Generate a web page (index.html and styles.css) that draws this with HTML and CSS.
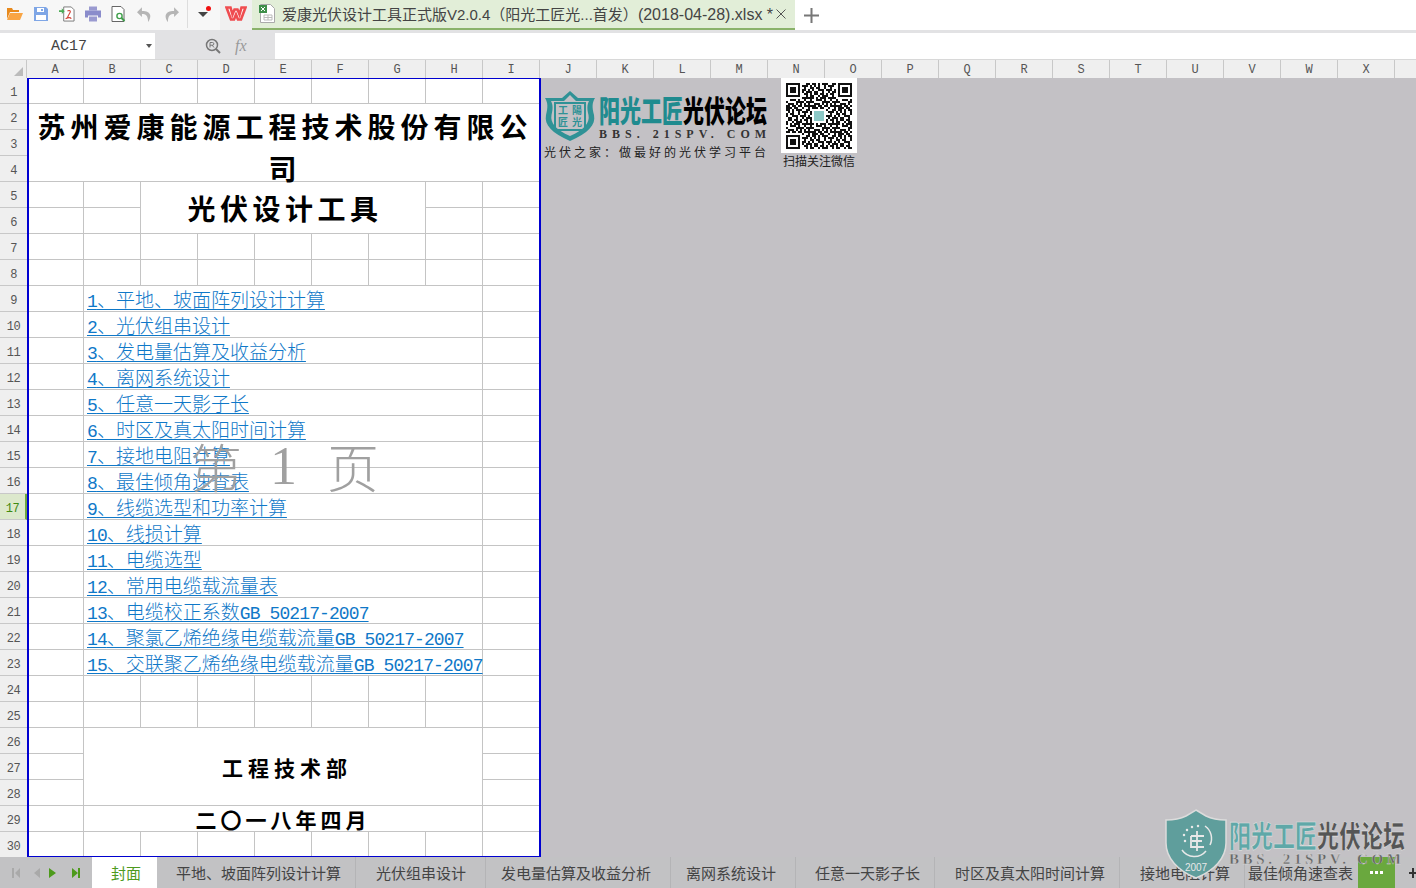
FILE: index.html
```html
<!DOCTYPE html>
<html lang="zh-CN">

<head>
    <meta charset="UTF-8">
    <title>爱康光伏设计工具</title>
    <link rel="stylesheet" href="styles.css">
</head>

<body>
    <div class="topbar">
        <div class="quick">
            <svg class="qicon" viewBox="0 0 16 14"><path d="M0 3V1h5l1 2h6v2H3L0 12z" fill="#e8891c"/><path d="M3 6h13l-3 7H0z" fill="#f9a545"/></svg>
            <svg class="qicon" viewBox="0 0 16 16"><path d="M1 1h12l2 2v12H1z" fill="#7fa6e6"/><path d="M4 2h7v4H4z" fill="#fff"/><path d="M8 3h2v2H8z" fill="#7fa6e6"/><path d="M3 9h10v5H3z" fill="#fff"/></svg>
            <svg class="qicon" viewBox="0 0 17 16"><path d="M5 .5h8l3 3v12H5z" fill="#fff" stroke="#777"/><path d="M0 4h3V2l3 3-3 3V6H0z" fill="#4bad55"/><path d="M9 12c1-3 2-4 3-6 .5-2-2-2-3-1M7 13c2-1 5-2 6 0" fill="none" stroke="#d4473c" stroke-width="1.2"/></svg>
            <svg class="qicon" viewBox="0 0 16 15"><path d="M4 0h8v4H4z" fill="#9a9ad0"/><path d="M0 4h16v7h-3V9H3v2H0z" fill="#8a8ccb"/><path d="M4 10h8v5H4z" fill="#9a9ad0"/></svg>
            <svg class="qicon" viewBox="0 0 15 16"><path d="M.5.5h9l3 3v12H.5z" fill="#fff" stroke="#666"/><circle cx="8" cy="10" r="2.6" fill="none" stroke="#3f9f4a" stroke-width="1.4"/><path d="M10 12l3 3" stroke="#3f9f4a" stroke-width="2"/></svg>
            <svg class="qicon" viewBox="0 0 13 13"><path d="M4 1L0 5l4 4V6.500c3 0 5 1 5 6.500 3-4 3-9-5-9z" fill="#b5b5b5"/></svg>
            <svg class="qicon" viewBox="0 0 13 13"><path d="M9 1l4 4-4 4V6.500c-3 0-5 1-5 6.500-3-4-3-9 5-9z" fill="#b5b5b5"/></svg>
            <span class="qsep"></span>
            <span class="qmenu"><span class="qdot"></span></span>
        </div>
        <div class="wps">
            <svg width="22" height="15" viewBox="0 0 22 15"><path d="M1.500 1.500h4l2 7 2-5h3l2 5 2-7h4l-4.500 12h-3l-2-5-2 5h-3z" fill="#fff" stroke="#ef4c50" stroke-width="2.600"/></svg>
        </div>
        <div class="file-tab">
            <svg width="17" height="19" viewBox="0 0 17 19"><path d="M1.500.5h10l4 4v14h-14z" fill="#fff" stroke="#aaa"/><path d="M0 1h8v8H0z" fill="#3f8f4a"/><path d="M2 3l4 4M6 3l-4 4" stroke="#fff"/><path d="M5 11h8v5H5zM5 13.500h8M9 11v5" fill="none" stroke="#bbb"/></svg>
            <span class="file-name">爱康光伏设计工具正式版V2.0.4（阳光工匠光...首发）<span class="file-date">(2018-04-28).xlsx *</span></span>
            <svg class="file-close" width="10" height="10" viewBox="0 0 10 10"><path d="M.5.5l9 9M9.500.5l-9 9" stroke="#555"/></svg>
        </div>
        <div class="new-tab">
            <svg width="15" height="15" viewBox="0 0 15 15"><path d="M7.500 0v15M0 7.500h15" stroke="#777" stroke-width="2"/></svg>
        </div>
    </div>

    <div class="formula-bar">
        <div class="name-box"><span>AC17</span><i class="caret"></i></div>
        <div class="formula-tools">
            <svg width="16" height="16" viewBox="0 0 16 16"><circle cx="7" cy="7" r="5.500" fill="none" stroke="#777" stroke-width="1.500"/><path d="M11 11l4 4" stroke="#777" stroke-width="2"/><path d="M5 9.500V4.500h2.500a1.300 1.300 0 010 2.700H5M7 7l2 2.500" fill="none" stroke="#777"/></svg>
            <span class="fx">fx</span>
        </div>
        <div class="formula-input"></div>
    </div>

    <div class="col-heads">
        <div class="corner"><i></i></div>
        <span>A</span><span>B</span><span>C</span><span>D</span><span>E</span><span>F</span><span>G</span><span>H</span><span>I</span>
        <span>J</span><span>K</span><span>L</span><span>M</span><span>N</span><span>O</span><span>P</span><span>Q</span><span>R</span>
        <span>S</span><span>T</span><span>U</span><span>V</span><span>W</span><span>X</span><span></span>
    </div>

    <div class="main">
        <div class="row-heads">
            <span>1</span><span>2</span><span>3</span><span>4</span><span>5</span><span>6</span><span>7</span><span>8</span><span>9</span><span>10</span>
            <span>11</span><span>12</span><span>13</span><span>14</span><span>15</span><span>16</span><span class="current">17</span><span>18</span><span>19</span><span>20</span>
            <span>21</span><span>22</span><span>23</span><span>24</span><span>25</span><span>26</span><span>27</span><span>28</span><span>29</span><span>30</span>
        </div>

        <div class="sheet-wrap">
            <table class="sheet">
                <tr><td></td><td></td><td></td><td></td><td></td><td></td><td></td><td></td><td></td></tr>
                <tr><td colspan="9" rowspan="3" class="title"><div>苏州爱康能源工程技术股份有限公司</div></td></tr>
                <tr></tr>
                <tr></tr>
                <tr><td></td><td></td><td colspan="5" rowspan="2" class="subtitle">光伏设计工具</td><td></td><td></td></tr>
                <tr><td></td><td></td><td></td><td></td></tr>
                <tr><td></td><td></td><td></td><td></td><td></td><td></td><td></td><td></td><td></td></tr>
                <tr><td></td><td></td><td></td><td></td><td></td><td></td><td></td><td></td><td></td></tr>
                <tr><td></td><td colspan="7" class="link"><a href="#"><b>1</b>、平地、坡面阵列设计计算</a></td><td></td></tr>
                <tr><td></td><td colspan="7" class="link"><a href="#"><b>2</b>、光伏组串设计</a></td><td></td></tr>
                <tr><td></td><td colspan="7" class="link"><a href="#"><b>3</b>、发电量估算及收益分析</a></td><td></td></tr>
                <tr><td></td><td colspan="7" class="link"><a href="#"><b>4</b>、离网系统设计</a></td><td></td></tr>
                <tr><td></td><td colspan="7" class="link"><a href="#"><b>5</b>、任意一天影子长</a></td><td></td></tr>
                <tr><td></td><td colspan="7" class="link"><a href="#"><b>6</b>、时区及真太阳时间计算</a></td><td></td></tr>
                <tr><td></td><td colspan="7" class="link"><a href="#"><b>7</b>、接地电阻计算</a></td><td></td></tr>
                <tr><td></td><td colspan="7" class="link"><a href="#"><b>8</b>、最佳倾角速查表</a></td><td></td></tr>
                <tr><td></td><td colspan="7" class="link"><a href="#"><b>9</b>、线缆选型和功率计算</a></td><td></td></tr>
                <tr><td></td><td colspan="7" class="link"><a href="#"><b>10</b>、线损计算</a></td><td></td></tr>
                <tr><td></td><td colspan="7" class="link"><a href="#"><b>11</b>、电缆选型</a></td><td></td></tr>
                <tr><td></td><td colspan="7" class="link"><a href="#"><b>12</b>、常用电缆载流量表</a></td><td></td></tr>
                <tr><td></td><td colspan="7" class="link"><a href="#"><b>13</b>、电缆校正系数<b>GB 50217-2007</b></a></td><td></td></tr>
                <tr><td></td><td colspan="7" class="link"><a href="#"><b>14</b>、聚氯乙烯绝缘电缆载流量<b>GB 50217-2007</b></a></td><td></td></tr>
                <tr><td></td><td colspan="7" class="link"><a href="#"><b>15</b>、交联聚乙烯绝缘电缆载流量<b>GB 50217-2007</b></a></td><td></td></tr>
                <tr><td></td><td></td><td></td><td></td><td></td><td></td><td></td><td></td><td></td></tr>
                <tr><td></td><td></td><td></td><td></td><td></td><td></td><td></td><td></td><td></td></tr>
                <tr><td></td><td colspan="7" rowspan="3" class="dept">工程技术部</td><td></td></tr>
                <tr><td></td><td></td></tr>
                <tr><td></td><td></td></tr>
                <tr><td></td><td colspan="7" class="date">二〇一八年四月</td><td></td></tr>
                <tr><td></td><td></td><td></td><td></td><td></td><td></td><td></td><td></td><td></td></tr>
            </table>
            <div class="page-mark"><span>第</span><span class="page-no">1</span><span>页</span></div>
            <div class="print-area"></div>
        </div>

        <div class="canvas">
            <div class="forum-logo">
                <div class="forum-head">
                    <svg class="shield" width="52" height="52" viewBox="0 0 52 52">
                        <path d="M26 1l8 7h17c-3 5-3 9-1 17 2 10-6 18-24 26C8 43 0 35 2 25 4 17 4 13 1 8h17z" fill="#2f9296"/>
                        <path d="M26 5l6 6h13c-2 4-2 8-.5 14C46 33 40 40 26 46 12 40 6 33 7.500 25 9 19 9 15 7 11h13z" fill="#c3c1c5"/>
                        <path d="M11 13h30v27H11z" fill="none" stroke="#2f9296" stroke-width="2"/>
                        <text x="14" y="24" class="shield-text">工</text>
                        <text x="28" y="24" class="shield-text">陽</text>
                        <text x="14" y="36" class="shield-text">匠</text>
                        <text x="28" y="36" class="shield-text">光</text>
                    </svg>
                    <div>
                        <div class="forum-name"><span class="teal">阳光工匠</span><span>光伏论坛</span></div>
                        <div class="forum-url">BBS. 21SPV. COM</div>
                    </div>
                </div>
                <div class="forum-tag">光伏之家：做最好的光伏学习平台</div>
            </div>
            <div class="qr-box">
                <div class="qr">
                    <svg width="66" height="66" viewBox="0 0 33 33" shape-rendering="crispEdges">
                        <defs>
                            <pattern id="qr-tile" width="13" height="13" patternUnits="userSpaceOnUse">
                                <path d="M0 0h2v1H0zM3 0h1v2H3zM5 0h3v1H5zM10 0h2v1h-2zM1 1h1v1H1zM6 1h1v2H6zM8 1h3v1H8zM12 1h1v2h-1zM0 2h1v2H0zM2 2h2v1H2zM9 2h1v2H9zM3 3h3v1H3zM7 3h2v1H7zM11 3h1v1h-1zM1 4h2v2H1zM5 4h1v2H5zM8 4h1v1H8zM10 4h3v1h-3zM4 5h1v1H4zM7 5h1v2H7zM9 5h2v1H9zM12 5h1v2h-1zM0 6h1v2H0zM3 6h1v1H3zM5 6h2v1H5zM10 6h1v2h-1zM2 7h1v2H2zM4 7h3v1H4zM8 7h2v1H8zM11 7h2v1h-2zM0 9h1v1H0zM3 8h2v1H3zM6 8h1v2H6zM9 8h1v1H9zM12 8h1v2h-1zM1 10h3v1H1zM5 9h1v2H5zM7 9h2v1H7zM10 9h2v1h-2zM7 10h1v2H7zM9 10h1v2H9zM11 10h1v1h-1zM0 11h2v2H0zM3 11h2v1H3zM6 11h1v1H6zM10 11h3v1h-3zM2 12h1v1H2zM4 12h2v1H4zM8 12h1v1H8zM11 12h1v1h-1z" fill="#111"/>
                            </pattern>
                        </defs>
                        <rect width="33" height="33" fill="url(#qr-tile)"/>
                        <path d="M0 0h8v8H0zM25 0h8v8h-8zM0 25h8v8H0zM13 13h7v7h-7z" fill="#fff"/>
                        <path d="M0 0h7v7H0zM1 1v5h5V1zM2 2h3v3H2zM26 0h7v7h-7zM27 1v5h5V1zM28 2h3v3h-3zM0 26h7v7H0zM1 27v5h5v-5zM2 28h3v3H2z" fill="#111" fill-rule="evenodd"/>
                        <path d="M14 14h5v5h-5z" fill="#8cc8c6"/>
                    </svg>
                </div>
                <div class="qr-caption">扫描关注微信</div>
            </div>
        </div>
    </div>

    <div class="sheet-tabs">
        <div class="tab-nav">
            <svg width="80" height="12" viewBox="0 0 80 12">
                <path d="M12 1h2v10h-2zM20 1v10l-5-5zM40 1v10l-6-5z" fill="#a9a9a9"/>
                <path d="M49 1v10l7-5zM72 1l6 5-6 5zM78 1h2v10h-2z" fill="#4d9a1c"/>
            </svg>
        </div>
        <div class="tab active">封面</div>
        <div class="tab">平地、坡面阵列设计计算</div>
        <div class="tab tab-roomy">光伏组串设计</div>
        <div class="tab tab-tight">发电量估算及收益分析</div>
        <div class="tab tab-tight">离网系统设计</div>
        <div class="tab">任意一天影子长</div>
        <div class="tab tab-late">时区及真太阳时间计算</div>
        <div class="tab tab-late">接地电阻计算</div>
        <div class="tab tab-last">最佳倾角速查表</div>
        <div class="tab-more"><i></i><i></i><i></i></div>
        <div class="tab-add"></div>
    </div>

    <div class="stamp">
        <svg width="62" height="70" viewBox="0 0 62 70">
            <path d="M31 1l10 6c6 3 13 4 20 4v23c0 15-12 28-30 35C13 62 1 49 1 34V11c7 0 14-1 20-4z" fill="#5f9e9c" stroke="#dcdcdc" stroke-width="1.500"/>
            <path d="M40 17a15 15 0 015 19M41 42a15 15 0 01-24-1" fill="none" stroke="#e8e8e8" stroke-width="1.500"/>
            <path d="M20 32v.1M19 26v.1M22 21v.1M27 18v.1M33 17v.1" stroke="#e8e8e8" stroke-width="2.500" stroke-linecap="round"/>
            <path d="M26 27h13M26 27v11h13M32 22v20M27 32h10" fill="none" stroke="#e8e8e8" stroke-width="1.800"/>
            <text x="31" y="62" class="stamp-year">2007</text>
        </svg>
        <div>
            <div class="stamp-name"><span class="stamp-teal">阳光工匠</span><span>光伏论坛</span></div>
            <div class="stamp-url">BBS. 21SPV. COM</div>
        </div>
    </div>
</body>

</html>
```

FILE: styles.css
```css
* {
    box-sizing: border-box;
}

body {
    margin: 0;
    width: 1416px;
    height: 888px;
    overflow: hidden;
    position: relative;
    background-color: #c3c1c5;
    font-family: "Noto Sans CJK SC", "Noto Sans", sans-serif;
}

/* title bar */
.topbar {
    display: flex;
    height: 33px;
    background-color: #fff;
    border-bottom: 3px solid #e2e2e4;
}

.quick {
    display: flex;
    align-items: center;
    width: 220px;
    padding: 0 0 2px 2px;
    background-color: #f7f7f7;
}

.qicon {
    width: 16px;
    height: 16px;
    margin: 0 5px;
}

.qsep {
    width: 1px;
    height: 28px;
    margin-left: 3px;
    background-color: #ddd;
}

.qmenu {
    position: relative;
    margin-left: 10px;
    border-top: 5px solid #444;
    border-left: 5px solid transparent;
    border-right: 5px solid transparent;
}

.qdot {
    position: absolute;
    left: 3px;
    top: -11px;
    width: 5px;
    height: 5px;
    border-radius: 50%;
    background-color: #f01010;
}

.wps {
    display: flex;
    align-items: center;
    justify-content: center;
    width: 32px;
    padding-bottom: 3px;
    background-color: #f0f0f0;
}

.file-tab {
    display: flex;
    align-items: center;
    width: 543px;
    padding: 0 0 1px 7px;
    background-color: #e2eed8;
    border-bottom: 2px solid #8ab26a;
    color: #444;
    font-family: "Liberation Sans", "Noto Sans CJK SC", sans-serif;
    font-size: 15px;
}

.file-name {
    margin-left: 6px;
    white-space: nowrap;
}

.file-date {
    font-size: 16px;
}

.file-close {
    margin-left: 3px;
}

.new-tab {
    display: flex;
    align-items: center;
    margin-left: 9px;
}

/* name box and formula */
.formula-bar {
    display: flex;
    height: 27px;
    background-color: #e2e2e4;
    border-bottom: 1px solid #d8d8d8;
}

.name-box {
    position: relative;
    width: 155px;
    background-color: #fff;
    padding-left: 51px;
    font: 15px/27px "Liberation Mono", monospace;
    color: #444;
}

.caret {
    position: absolute;
    right: 3px;
    top: 11px;
    border-top: 4px solid #555;
    border-left: 3.500px solid transparent;
    border-right: 3.500px solid transparent;
}

.formula-tools {
    display: flex;
    align-items: center;
    width: 120px;
    padding-left: 50px;
    gap: 14px;
}

.fx {
    font: italic 16px "Liberation Serif", serif;
    color: #999;
}

.formula-input {
    flex: 1;
    background-color: #fff;
}

/* column header */
.col-heads {
    display: flex;
    height: 18px;
    background-color: #efefef;
}

.col-heads span {
    flex: 0 0 57px;
    border-right: 1px solid #c8c8c8;
    text-align: center;
    font: 12px/20px "Liberation Mono", monospace;
    color: #555;
}

.corner {
    position: relative;
    flex: 0 0 27px;
    border-right: 1px solid #c8c8c8;
}

.corner i {
    position: absolute;
    right: 3px;
    bottom: 2px;
    border-bottom: 9px solid #bbb;
    border-left: 9px solid transparent;
}

/* sheet */
.main {
    display: flex;
    height: 779px;
    overflow: hidden;
}

.row-heads {
    flex: 0 0 27px;
    background-color: #efefef;
}

.row-heads span {
    display: block;
    height: 26px;
    border-bottom: 1px solid #c8c8c8;
    text-align: center;
    font: 12px/30px "Liberation Mono", monospace;
    letter-spacing: -0.5px;
    color: #555;
}

.row-heads .current {
    background-color: #dce8cc;
    border-right: 2px solid #6fa840;
    color: #3f8a10;
}

.sheet-wrap {
    position: relative;
    flex: 0 0 513px;
}

.sheet {
    table-layout: fixed;
    width: 513px;
    border-spacing: 0;
    background-color: #fff;
}

.sheet td {
    width: 57px;
    height: 26px;
    padding: 0;
    border-right: 1px solid #c4c4c4;
    border-bottom: 1px solid #c4c4c4;
    white-space: nowrap;
}

.sheet .title {
    vertical-align: top;
    white-space: normal;
}

/* the merged cell keeps its height, the wrapped line runs to its bottom edge */
.title div {
    height: 77px;
    padding: 1px 0 0 4px;
    text-align: center;
    font-size: 28px;
    font-weight: 700;
    line-height: 42px;
    letter-spacing: 5px;
    color: #000;
}

.sheet .subtitle {
    padding-left: 4px;
    text-align: center;
    font-size: 28px;
    font-weight: 700;
    letter-spacing: 4.500px;
    line-height: 40px;
    color: #000;
}

.sheet .dept,
.sheet .date {
    text-align: center;
    font-size: 21px;
    font-weight: 700;
    letter-spacing: 5px;
    line-height: 24px;
    color: #000;
}

.sheet .dept {
    padding-left: 8px;
}

.sheet .date {
    letter-spacing: 4px;
}

.sheet .link {
    padding-left: 3px;
    vertical-align: top;
}

.link a {
    display: block;
    height: 25px;
    color: #0f78c8;
    font-size: 19px;
    font-weight: 300;
    line-height: 26px;
    text-decoration-thickness: 1px;
    text-underline-offset: 2px;
}

.link b {
    font-family: "Liberation Mono", monospace;
    font-size: 18px;
    font-weight: 400;
    letter-spacing: -0.9px;
}

/* the print page mark lies over the cells */
.page-mark {
    position: absolute;
    left: 163px;
    top: 356px;
    display: flex;
    align-items: center;
    font-size: 52px;
    font-weight: 300;
    line-height: 64px;
    color: #a0a0a0;
}

.page-no {
    margin: 0 30px 0 28px;
    font-family: "Liberation Serif", serif;
    font-size: 54px;
}

.print-area {
    position: absolute;
    left: 0;
    top: 0;
    width: 514px;
    height: 779px;
    border: 2px solid #0000d0;
    border-width: 1px 2px 1px 2px;
}

/* pictures floating beside the print area */
.canvas {
    display: flex;
    flex: 1;
    background-color: #c3c1c5;
}

.forum-logo {
    margin: 12px 0 0 4px;
    width: 238px;
}

.forum-head {
    display: flex;
    gap: 3px;
}

.shield {
    flex: none;
}

.shield-text {
    font-size: 10px;
    font-weight: 700;
    fill: #2f9296;
}

.forum-name {
    display: flex;
    height: 35px;
    margin-top: 3px;
    font-size: 21px;
    font-weight: 900;
    line-height: 24px;
    color: #000;
    transform: scaleY(1.4);
    transform-origin: top;
}

.teal {
    color: #1f8b8f;
}

.forum-url {
    font: 700 12px/12px "Liberation Serif", serif;
    letter-spacing: 5px;
    color: #333;
    white-space: nowrap;
}

.forum-tag {
    margin-top: 2px;
    font-size: 12px;
    line-height: 16px;
    letter-spacing: 3px;
    white-space: nowrap;
    color: #222;
}

.qr-box {
    width: 76px;
    margin-left: -1px;
}

.qr {
    display: flex;
    align-items: center;
    justify-content: center;
    width: 76px;
    height: 75px;
    background-color: #fff;
}

.qr-caption {
    margin-top: -1px;
    text-align: center;
    font-size: 12px;
    line-height: 18px;
    color: #222;
    white-space: nowrap;
}

/* sheet tabs */
.sheet-tabs {
    display: flex;
    align-items: stretch;
    height: 31px;
    background-color: #c2c2c4;
    overflow: hidden;
}

.tab-nav {
    display: flex;
    align-items: center;
    flex: 0 0 92px;
}

.tab {
    flex: none;
    padding: 0 14px 0 19px;
    border-right: 1px solid #b4b4b6;
    font-size: 15px;
    line-height: 32px;
    color: #444;
    white-space: nowrap;
}

.tab.active {
    width: 65px;
    padding: 0 19px;
    border-right: 0;
    background-color: #fff;
    color: #4e9a1e;
}

.tab-roomy {
    padding: 0 19px 0 20px;
}

.tab-tight {
    padding: 0 19px 0 15px;
}

.tab-late {
    padding: 0 14px 0 20px;
}

.tab-last {
    width: 113px;
    padding: 0 0 0 3px;
    border-right: 0;
}

.tab-more {
    display: flex;
    flex: 0 0 37px;
    align-items: center;
    justify-content: center;
    gap: 2px;
    background-color: #6aa83e;
}

.tab-more i {
    width: 3px;
    height: 3px;
    background-color: #fff;
}

.tab-add {
    position: relative;
    flex: 1;
}

.tab-add::before,
.tab-add::after {
    content: "";
    position: absolute;
    background-color: #333;
}

.tab-add::before {
    left: 17px;
    top: 11px;
    width: 2px;
    height: 10px;
}

.tab-add::after {
    left: 14px;
    top: 15px;
    width: 7px;
    height: 2px;
}

/* watermark over the bottom right corner */
.stamp {
    position: absolute;
    left: 1165px;
    top: 809px;
    display: flex;
    gap: 2px;
}

.stamp-year {
    font: 10px "Liberation Sans", sans-serif;
    fill: #e8e8e8;
    text-anchor: middle;
}

.stamp-name {
    display: flex;
    margin-top: 7px;
    height: 36px;
    font-size: 22px;
    font-weight: 900;
    line-height: 26px;
    color: #555;
    transform: scaleY(1.35);
    transform-origin: top;
    -webkit-text-stroke: 0.5px #dedede;
}

.stamp-teal {
    color: #5fa8a8;
}

.stamp-url {
    font: 700 15px/14px "Liberation Serif", serif;
    letter-spacing: 3.600px;
    color: #666;
    white-space: nowrap;
    -webkit-text-stroke: 0.3px #dedede;
}
```
